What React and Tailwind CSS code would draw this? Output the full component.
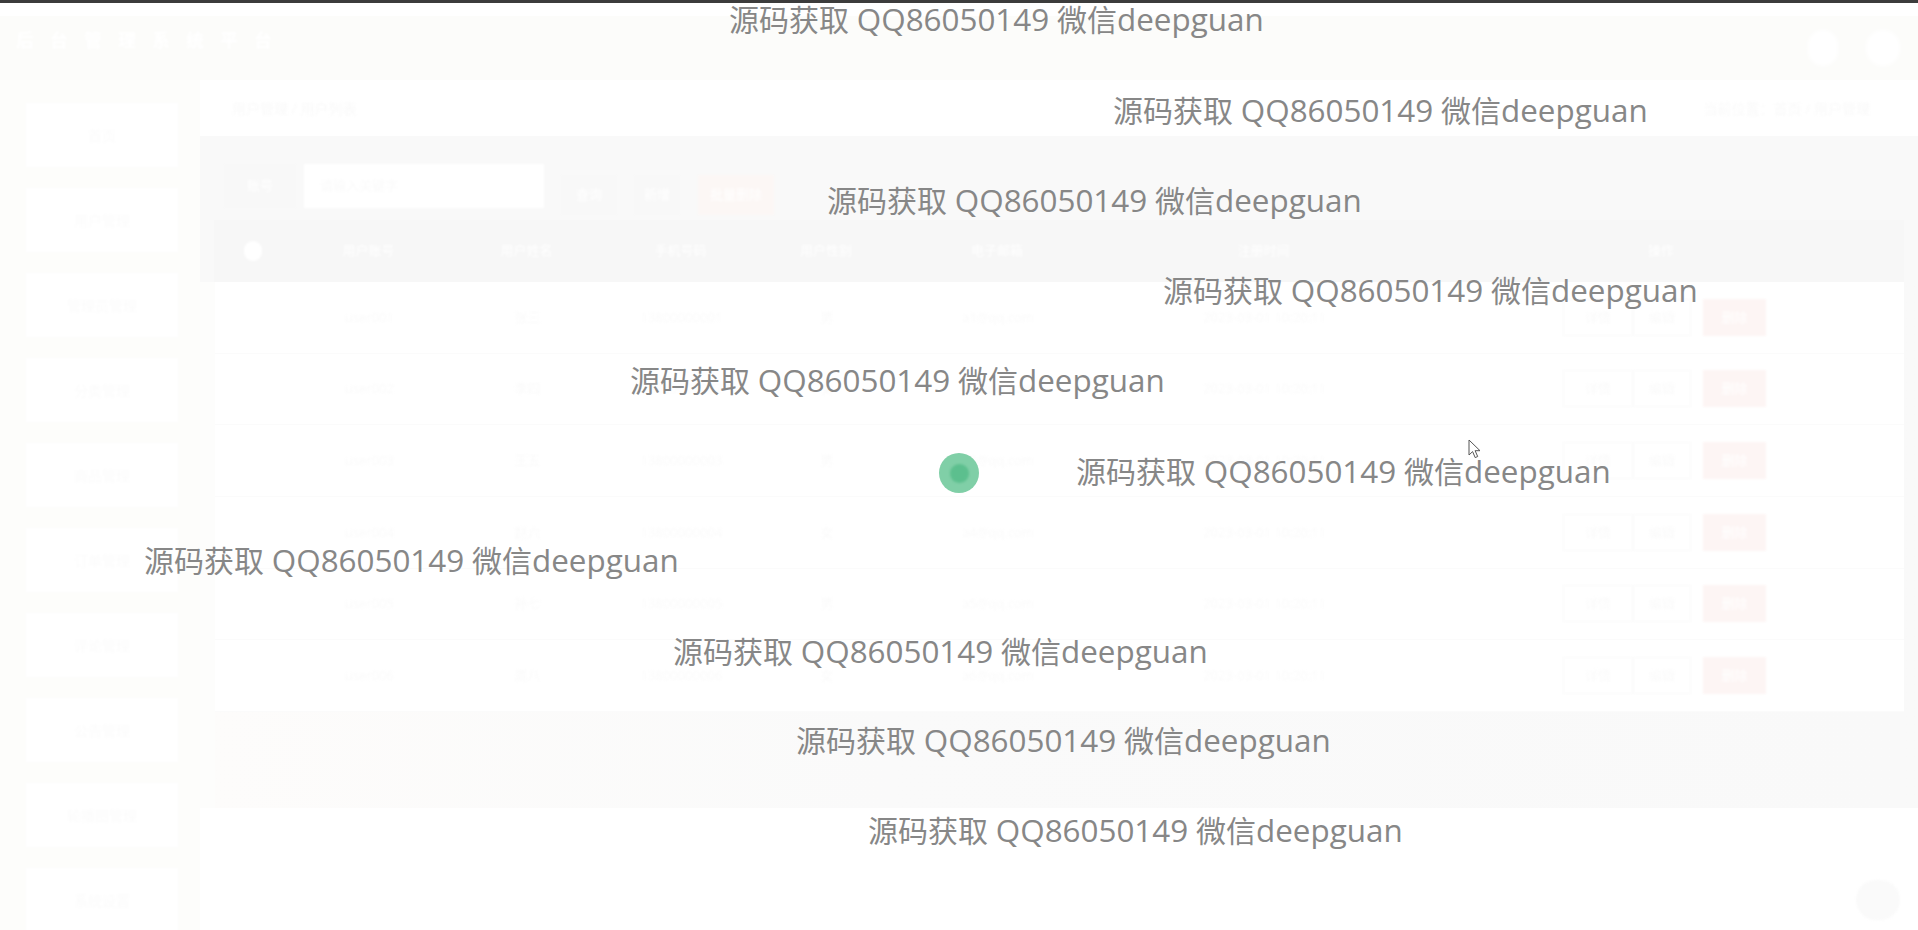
import React from 'react';

const menu = ['首页', '用户管理', '管理员管理', '分类管理', '商品管理', '订单管理', '评论管理', '公告管理', '轮播图管理', '系统设置'];

const columns = ['用户账号', '用户姓名', '手机号码', '用户性别', '电子邮箱', '注册时间'];

const rows = [
  ['user001', '张三', '13800000001', '男', 'a1@qq.com', '2023-03-01 10:20:11'],
  ['user002', '李四', '13800000002', '女', 'a2@qq.com', '2023-03-01 10:20:11'],
  ['user003', '王五', '13800000003', '男', 'a3@qq.com', '2023-03-01 10:20:11'],
  ['user004', '赵六', '13800000004', '女', 'a4@qq.com', '2023-03-01 10:20:11'],
  ['user005', '孙七', '13800000005', '男', 'a5@qq.com', '2023-03-01 10:20:11'],
  ['user006', '周八', '13800000006', '女', 'a6@qq.com', '2023-03-01 10:20:11'],
];

const marks = [
  { left: 'left-[729px]', top: 'top-0' },
  { left: 'left-[1113px]', top: 'top-[91px]' },
  { left: 'left-[827px]', top: 'top-[181px]' },
  { left: 'left-[1163px]', top: 'top-[271px]' },
  { left: 'left-[630px]', top: 'top-[361px]' },
  { left: 'left-[1076px]', top: 'top-[452px]' },
  { left: 'left-[144px]', top: 'top-[541px]' },
  { left: 'left-[673px]', top: 'top-[632px]' },
  { left: 'left-[796px]', top: 'top-[721px]' },
  { left: 'left-[868px]', top: 'top-[811px]' },
];

const grid = 'grid grid-cols-[76px_157px_159px_149px_142px_200px_333px_1fr] items-center text-center';

export default function App() {
  return (
    <div className="relative h-screen w-full overflow-hidden bg-white font-['Open_Sans','Noto_Sans_CJK_SC',sans-serif]">
      <div className="h-[3px] bg-[#3c3c3c]" />
      <div className="h-[13px] bg-white" />

      {/* Header */}
      <div className="flex h-16 items-center justify-between bg-[#fcfcfa] pl-4 pr-[18px]">
        <div className="pb-4 text-[18px] font-bold tracking-[16px] text-white blur-[1px]">后台管理系统平台</div>
        <div className="flex items-center gap-7">
          <div className="h-9 w-[30px] rounded-full bg-white blur-[2px]" />
          <div className="h-9 w-[34px] rounded-full bg-white blur-[2px]" />
        </div>
      </div>

      <div className="flex">
        {/* Sidebar */}
        <div className="flex h-[850px] w-[200px] shrink-0 flex-col gap-[21px] overflow-hidden bg-[#fdfdfb] pt-[23px] pl-[26px] pr-[22px]">
          {menu.map((name) => (
            <div key={name} className="flex h-16 shrink-0 items-center justify-center bg-white text-[14px] text-[#fbfbfb] blur-[1px]">
              {name}
            </div>
          ))}
        </div>

        {/* Main */}
        <div className="min-w-0 flex-1">
          <div className="flex h-14 items-center justify-between bg-white pl-8 pr-12 text-[14px] text-[#f9f9f9]">
            <span className="blur-[1px]">用户管理 / 用户列表</span>
            <span className="blur-[1px]">当前位置：首页 / 用户管理</span>
          </div>

          <div className="h-[146px] bg-[#f9f9f9] pt-7 pl-[14px] pr-[14px]">
            <div className="flex h-10 items-start pl-[10px]">
              <div className="flex h-11 w-[72px] items-center justify-center bg-[#f8f8f8] text-[13px] text-white blur-[1px]">账号</div>
              <div className="ml-2 flex h-11 w-[240px] items-center bg-white pl-4 text-[13px] text-[#fafafa] blur-[1px]">请输入关键字</div>
              <div className="mt-[11px] ml-[17px] flex h-10 w-[56px] items-center justify-center bg-[#f8f8f8] text-[13px] text-white blur-[1px]">查询</div>
              <div className="mt-[11px] ml-[17px] flex h-10 w-[46px] items-center justify-center bg-[#f8f8f8] text-[13px] text-white blur-[1px]">新增</div>
              <div className="mt-[11px] ml-[18px] flex h-10 w-[76px] items-center justify-center bg-[#fcf7f5] text-[13px] text-white blur-[1px]">批量删除</div>
            </div>
            <div className={`${grid} mt-4 h-[62px] bg-[#f7f7f7] text-[13px] text-white`}>
              <div className="flex justify-center pl-[2px]">
                <div className="h-5 w-[18px] rounded-full bg-white blur-[1px]" />
              </div>
              {columns.map((name) => (
                <div key={name} className="blur-[1px]">{name}</div>
              ))}
              <div className="pr-3 blur-[1px]">操作</div>
            </div>
          </div>

          <div className="h-[526px] bg-[#fdfdfc] pl-[15px]">
            <div className="h-full bg-linear-to-r from-[#fdfcfb] via-[#fafafa] via-40% to-[#f9f9f9] pr-[14px]">
              <div className="bg-white">
                {rows.map((row, i) => (
                  <div key={i} className={`${grid} h-[71.67px] border-b border-[#fbfbfb] text-[13px] text-[#fafafa]`}>
                    <div />
                    {row.map((cell, j) => (
                      <div key={j} className="blur-[1px]">{cell}</div>
                    ))}
                    <div className="flex pl-[132px] blur-[1px]">
                      <div className="flex h-[37px] w-[70px] shrink-0 items-center justify-center border border-[#fafafa] text-[#fafafa]">详情</div>
                      <div className="flex h-[37px] w-[58px] shrink-0 items-center justify-center border border-[#fafafa] text-[#fafafa]">编辑</div>
                      <div className="ml-3 flex h-[37px] w-[63px] shrink-0 items-center justify-center bg-[#fdf5f4] text-white">删除</div>
                    </div>
                  </div>
                ))}
              </div>
            </div>
          </div>
        </div>
      </div>

      {/* Watermarks */}
      {marks.map((m, i) => (
        <div key={i} className={`absolute ${m.left} ${m.top} whitespace-nowrap text-[30px] leading-[38px] text-[#878787]`}>
          源码获取 <span className="text-[31.4px]">QQ86050149</span> 微信<span className="text-[31.4px]">deepguan</span>
        </div>
      ))}

      {/* Loading spinner */}
      <div className="absolute top-[453px] left-[939px] flex h-10 w-10 items-center justify-center rounded-full bg-[#80cfa7]">
        <div className="h-[19px] w-[19px] rounded-full bg-[#5cbf8e] blur-[1px]" />
      </div>

      {/* Mouse cursor */}
      <svg className="absolute top-[439px] left-[1468px]" width="14" height="20" viewBox="0 0 14 20">
        <path d="M1 1v15l3.6-3.4 2.6 6 2.5-1.1-2.6-5.8H12z" fill="#fff" stroke="#555" strokeWidth="1" strokeLinejoin="round" />
      </svg>

      {/* Back to top */}
      <div className="absolute top-[880px] left-[1856px] h-10 w-11 rounded-full bg-[#fafafa] blur-[1px]" />
    </div>
  );
}
